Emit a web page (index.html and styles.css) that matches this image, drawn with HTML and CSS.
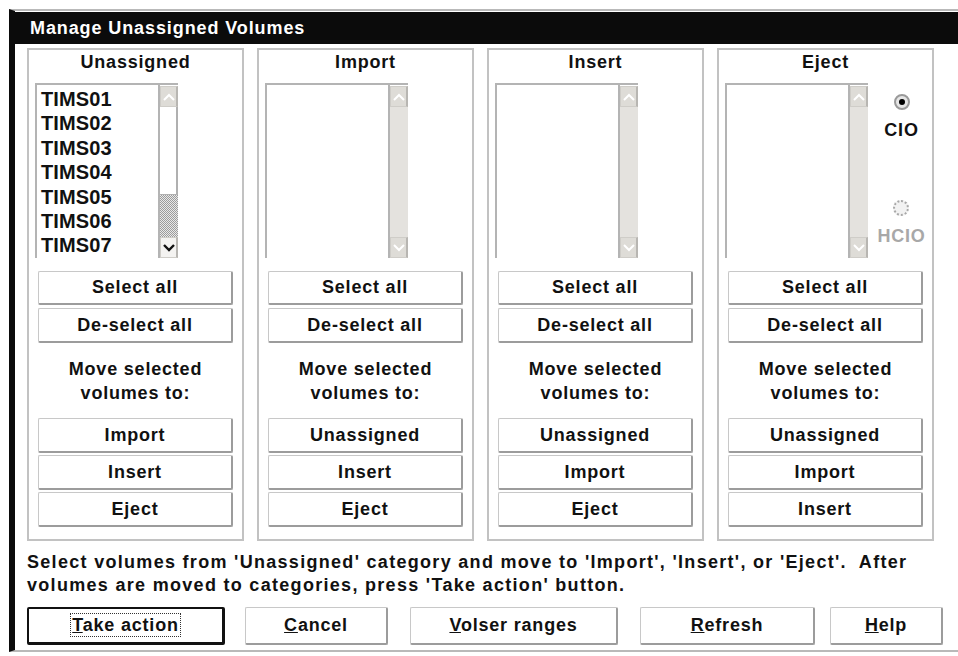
FILE: index.html
```html
<!DOCTYPE html>
<html lang="en">
<head>
    <meta charset="UTF-8">
    <title>Manage Unassigned Volumes</title>
    <link rel="stylesheet" href="styles.css">
</head>
<body>
    <div class="window">
        <div class="titlebar">Manage Unassigned Volumes</div>

        <div class="content">
            <div class="panels">
                <!-- Unassigned -->
                <div class="panel">
                    <div class="panel-title">Unassigned</div>
                    <div class="list-row">
                        <div class="listbox">
                            <ul class="items">
                                <li>TIMS01</li>
                                <li>TIMS02</li>
                                <li>TIMS03</li>
                                <li>TIMS04</li>
                                <li>TIMS05</li>
                                <li>TIMS06</li>
                                <li>TIMS07</li>
                            </ul>
                            <div class="scrollbar">
                                <div class="arrow arrow-off">
                                    <svg width="12" height="8" viewBox="0 0 12 8"><polyline points="1,7 6,2 11,7" fill="none" stroke="#fff" stroke-width="2"/></svg>
                                </div>
                                <div class="thumb"></div>
                                <div class="track-dither"></div>
                                <div class="arrow arrow-on">
                                    <svg width="12" height="8" viewBox="0 0 12 8"><polyline points="1,1 6,6 11,1" fill="none" stroke="#111" stroke-width="2.4"/></svg>
                                </div>
                            </div>
                        </div>
                    </div>
                    <button class="btn btn-first">Select all</button>
                    <button class="btn">De-select all</button>
                    <p class="move-label">Move selected<br>volumes to:</p>
                    <button class="btn">Import</button>
                    <button class="btn">Insert</button>
                    <button class="btn">Eject</button>
                </div>

                <!-- Import -->
                <div class="panel">
                    <div class="panel-title">Import</div>
                    <div class="list-row">
                        <div class="listbox">
                            <ul class="items"></ul>
                            <div class="scrollbar scrollbar-empty">
                                <div class="arrow arrow-off">
                                    <svg width="12" height="8" viewBox="0 0 12 8"><polyline points="1,7 6,2 11,7" fill="none" stroke="#fff" stroke-width="2"/></svg>
                                </div>
                                <div class="track"></div>
                                <div class="arrow arrow-off">
                                    <svg width="12" height="8" viewBox="0 0 12 8"><polyline points="1,1 6,6 11,1" fill="none" stroke="#fff" stroke-width="2"/></svg>
                                </div>
                            </div>
                        </div>
                    </div>
                    <button class="btn btn-first">Select all</button>
                    <button class="btn">De-select all</button>
                    <p class="move-label">Move selected<br>volumes to:</p>
                    <button class="btn">Unassigned</button>
                    <button class="btn">Insert</button>
                    <button class="btn">Eject</button>
                </div>

                <!-- Insert -->
                <div class="panel">
                    <div class="panel-title">Insert</div>
                    <div class="list-row">
                        <div class="listbox">
                            <ul class="items"></ul>
                            <div class="scrollbar scrollbar-empty">
                                <div class="arrow arrow-off">
                                    <svg width="12" height="8" viewBox="0 0 12 8"><polyline points="1,7 6,2 11,7" fill="none" stroke="#fff" stroke-width="2"/></svg>
                                </div>
                                <div class="track"></div>
                                <div class="arrow arrow-off">
                                    <svg width="12" height="8" viewBox="0 0 12 8"><polyline points="1,1 6,6 11,1" fill="none" stroke="#fff" stroke-width="2"/></svg>
                                </div>
                            </div>
                        </div>
                    </div>
                    <button class="btn btn-first">Select all</button>
                    <button class="btn">De-select all</button>
                    <p class="move-label">Move selected<br>volumes to:</p>
                    <button class="btn">Unassigned</button>
                    <button class="btn">Import</button>
                    <button class="btn">Eject</button>
                </div>

                <!-- Eject -->
                <div class="panel">
                    <div class="panel-title">Eject</div>
                    <div class="list-row">
                        <div class="listbox">
                            <ul class="items"></ul>
                            <div class="scrollbar scrollbar-empty">
                                <div class="arrow arrow-off">
                                    <svg width="12" height="8" viewBox="0 0 12 8"><polyline points="1,7 6,2 11,7" fill="none" stroke="#fff" stroke-width="2"/></svg>
                                </div>
                                <div class="track"></div>
                                <div class="arrow arrow-off">
                                    <svg width="12" height="8" viewBox="0 0 12 8"><polyline points="1,1 6,6 11,1" fill="none" stroke="#fff" stroke-width="2"/></svg>
                                </div>
                            </div>
                        </div>
                        <div class="radios">
                            <div class="radio-item">
                                <span class="radio radio-checked"></span>
                                <span class="radio-label">CIO</span>
                            </div>
                            <div class="radio-item radio-disabled">
                                <span class="radio"></span>
                                <span class="radio-label">HCIO</span>
                            </div>
                        </div>
                    </div>
                    <button class="btn btn-first">Select all</button>
                    <button class="btn">De-select all</button>
                    <p class="move-label">Move selected<br>volumes to:</p>
                    <button class="btn">Unassigned</button>
                    <button class="btn">Import</button>
                    <button class="btn">Insert</button>
                </div>
            </div>

            <p class="help-text">Select volumes from 'Unassigned' category and move to 'Import', 'Insert', or 'Eject'.&nbsp; After<br>volumes are moved to categories, press 'Take action' button.</p>

            <div class="actions">
                <button class="btn action take-action"><span class="focus"><u>T</u>ake action</span></button>
                <button class="btn action cancel"><u>C</u>ancel</button>
                <button class="btn action volser"><u>V</u>olser ranges</button>
                <button class="btn action refresh"><u>R</u>efresh</button>
                <button class="btn action help"><u>H</u>elp</button>
            </div>
        </div>
    </div>
</body>
</html>
```

FILE: styles.css
```css
body {
    margin: 0;
    padding: 0;
    background-color: #fff;
    color: #111;
    font-family: 'Liberation Sans', Arial, sans-serif;
    font-weight: bold;
    font-size: 18px;
    letter-spacing: 0.8px;
    overflow: hidden;
}

.window {
    margin-top: 9px;
    margin-left: 9px;
    border-top: 2px solid #b9b9b9;
    border-left: 6px solid #0b0b0b;
    border-bottom: 2px solid #b9b9b9;
    height: 643px;
    box-sizing: border-box;
}

.titlebar {
    background-color: #0b0b0b;
    color: #fff;
    height: 32px;
    line-height: 32px;
    padding-left: 15px;
    letter-spacing: 0.9px;
    margin-top: 1px;
}

.content {
    padding-left: 12px;
    padding-top: 4px;
}

.panels {
    display: flex;
    gap: 13px;
}

.panel {
    width: 217px;
    box-sizing: border-box;
    border: 2px solid #c2c2c2;
    display: flex;
    flex-direction: column;
    padding-bottom: 12px;
}

.panel-title {
    text-align: center;
    line-height: 25px;
    margin-bottom: 8px;
}

.list-row {
    display: flex;
    margin-left: 6px;
}

.listbox {
    width: 143px;
    height: 175px;
    box-sizing: border-box;
    border-top: 2px solid #b4b4b4;
    border-left: 2px solid #b4b4b4;
    display: flex;
}

.items {
    list-style: none;
    margin: 0;
    padding: 2px 0 0 4px;
    flex: 1;
    font-size: 20px;
    line-height: 24.4px;
    letter-spacing: 0.1px;
}

.scrollbar {
    width: 20px;
    display: flex;
    flex-direction: column;
    border-left: 2px solid #b4b4b4;
    box-sizing: border-box;
    padding-top: 1px;
}

.arrow {
    height: 21px;
    display: flex;
    align-items: center;
    justify-content: center;
    box-sizing: border-box;
    border: 1px solid #cfcdc8;
    border-right: 2px solid #b8b6b2;
}

.arrow-off {
    background-color: #dedcd7;
}

.arrow-on {
    background-color: #f4f3f1;
}

.thumb {
    height: 87px;
    background-color: #fff;
    border-right: 2px solid #b0b0b0;
    border-bottom: 1px solid #b0b0b0;
}

.track-dither {
    flex: 1;
    background: repeating-conic-gradient(#9c9c9c 0 25%, #e8e8e8 0 50%) 0 0 / 2px 2px;
}

.track {
    flex: 1;
    background-color: #e4e2de;
}

.radios {
    flex: 1;
    display: flex;
    flex-direction: column;
    align-items: center;
    padding-top: 11px;
    padding-left: 3px;
}

.radio-item {
    display: flex;
    flex-direction: column;
    align-items: center;
    gap: 10px;
}

.radio-disabled {
    margin-top: 60px;
    color: #a8a8a8;
}

.radio {
    width: 16px;
    height: 16px;
    border-radius: 50%;
    box-sizing: border-box;
    background-color: #e6e6e6;
    border: 2px solid #9a9a9a;
    display: flex;
    align-items: center;
    justify-content: center;
}

.radio-checked::after {
    content: "";
    width: 6px;
    height: 6px;
    border-radius: 50%;
    background-color: #000;
}

.radio-disabled .radio {
    border: 2px dotted #a8a8a8;
    background-color: #f2f2f2;
}

.radio-label {
    line-height: 20px;
}

.btn {
    font-family: 'Liberation Sans', Arial, sans-serif;
    font-weight: bold;
    font-size: 18px;
    letter-spacing: 0.8px;
    color: #111;
    background-color: #fff;
    border: 1px solid #c8c8c8;
    border-right: 2px solid #9c9c9c;
    border-bottom: 2px solid #9c9c9c;
    border-radius: 2px;
    margin: 2px 9px 0;
    height: 35px;
    padding: 0;
    cursor: pointer;
}

.btn-first {
    margin-top: 13px;
    height: 34px;
}

.btn-first + .btn {
    margin-top: 3px;
}

.move-label {
    margin: 14px 0 13px;
    text-align: center;
    line-height: 24px;
}

.move-label + .btn {
    margin-top: 0;
}

.help-text {
    margin: 10px 0 0;
    line-height: 23px;
    letter-spacing: 1.3px;
}

.actions {
    display: flex;
    margin-top: 10px;
}

.action {
    margin: 0;
    height: 38px;
}

.take-action {
    width: 198px;
    border: 2px solid #111;
    border-right: 3px solid #111;
    border-bottom: 3px solid #111;
}

.focus {
    border: 1px dotted #333;
    padding: 1px 1px;
}

.cancel {
    width: 143px;
    margin-left: 20px;
}

.volser {
    width: 208px;
    margin-left: 22px;
}

.refresh {
    width: 175px;
    margin-left: 22px;
}

.help {
    width: 113px;
    margin-left: 15px;
}
```
